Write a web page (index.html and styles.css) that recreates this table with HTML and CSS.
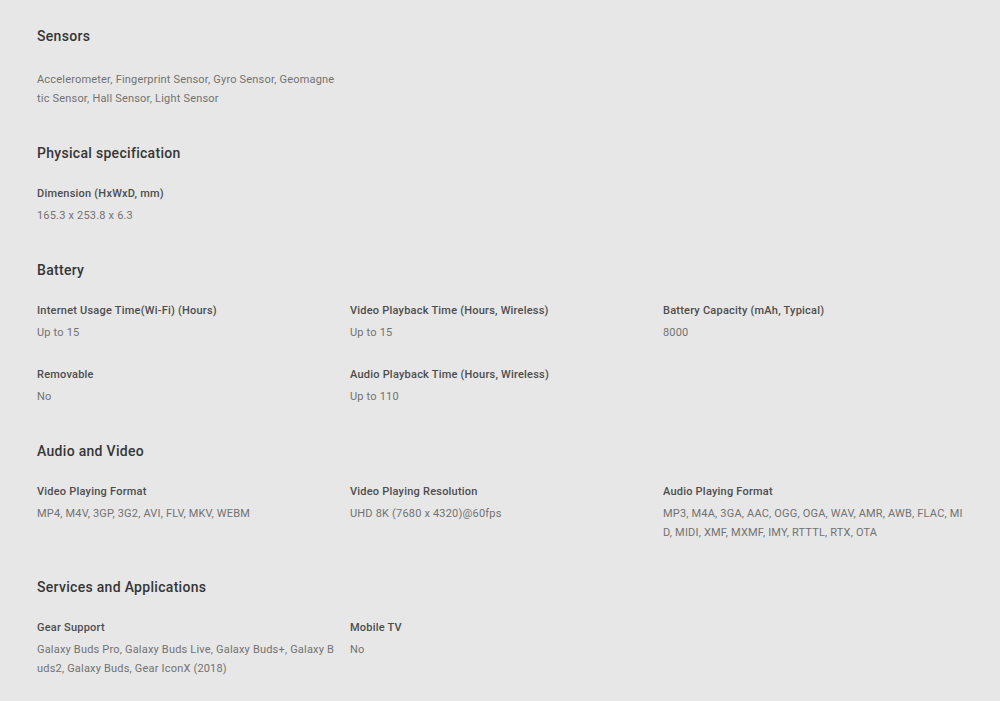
FILE: index.html
```html
<!DOCTYPE html>
<html>
<head>
<meta charset="utf-8">
<link rel="stylesheet" href="styles.css">
</head>
<body>
<main class="specs">
  <section class="spec-section">
    <h2 class="spec-title">Sensors</h2>
    <div class="spec-grid spec-grid--nolabel">
      <div class="spec-item">
        <p class="spec-value">Accelerometer, Fingerprint Sensor, Gyro Sensor, Geomagnetic Sensor, Hall Sensor, Light Sensor</p>
      </div>
    </div>
  </section>

  <section class="spec-section">
    <h2 class="spec-title">Physical specification</h2>
    <div class="spec-grid">
      <div class="spec-item">
        <h3 class="spec-label">Dimension (HxWxD, mm)</h3>
        <p class="spec-value">165.3 x 253.8 x 6.3</p>
      </div>
    </div>
  </section>

  <section class="spec-section">
    <h2 class="spec-title">Battery</h2>
    <div class="spec-grid">
      <div class="spec-item">
        <h3 class="spec-label">Internet Usage Time(Wi-Fi) (Hours)</h3>
        <p class="spec-value">Up to 15</p>
      </div>
      <div class="spec-item">
        <h3 class="spec-label">Video Playback Time (Hours, Wireless)</h3>
        <p class="spec-value">Up to 15</p>
      </div>
      <div class="spec-item">
        <h3 class="spec-label">Battery Capacity (mAh, Typical)</h3>
        <p class="spec-value">8000</p>
      </div>
      <div class="spec-item">
        <h3 class="spec-label">Removable</h3>
        <p class="spec-value">No</p>
      </div>
      <div class="spec-item">
        <h3 class="spec-label">Audio Playback Time (Hours, Wireless)</h3>
        <p class="spec-value">Up to 110</p>
      </div>
    </div>
  </section>

  <section class="spec-section">
    <h2 class="spec-title">Audio and Video</h2>
    <div class="spec-grid">
      <div class="spec-item">
        <h3 class="spec-label">Video Playing Format</h3>
        <p class="spec-value">MP4, M4V, 3GP, 3G2, AVI, FLV, MKV, WEBM</p>
      </div>
      <div class="spec-item">
        <h3 class="spec-label">Video Playing Resolution</h3>
        <p class="spec-value">UHD 8K (7680 x 4320)@60fps</p>
      </div>
      <div class="spec-item">
        <h3 class="spec-label">Audio Playing Format</h3>
        <p class="spec-value">MP3, M4A, 3GA, AAC, OGG, OGA, WAV, AMR, AWB, FLAC, MID, MIDI, XMF, MXMF, IMY, RTTTL, RTX, OTA</p>
      </div>
    </div>
  </section>

  <section class="spec-section">
    <h2 class="spec-title">Services and Applications</h2>
    <div class="spec-grid">
      <div class="spec-item">
        <h3 class="spec-label">Gear Support</h3>
        <p class="spec-value">Galaxy Buds Pro, Galaxy Buds Live, Galaxy Buds+, Galaxy Buds2, Galaxy Buds, Gear IconX (2018)</p>
      </div>
      <div class="spec-item">
        <h3 class="spec-label">Mobile TV</h3>
        <p class="spec-value">No</p>
      </div>
    </div>
  </section>
</main>
</body>
</html>
```

FILE: styles.css
```css
html, body {
  margin: 0;
  padding: 0;
  background: #e7e7e7;
}

body {
  font-family: Roboto, "Liberation Sans", sans-serif;
  color: #333;
}

.specs {
  padding: 26px 37px 0 37px;
}

.spec-section {
  margin-bottom: 35px;
}

.spec-title {
  margin: 0 0 23.5px 0;
  font-size: 14px;
  line-height: 20px;
  font-weight: 500;
  letter-spacing: 0.3px;
  color: #363636;
}

.spec-grid {
  display: grid;
  grid-template-columns: 300.4px 300.4px 300.4px;
  column-gap: 12.6px;
  row-gap: 25.5px;
}

.spec-label {
  margin: 0 0 3.5px 0;
  font-size: 11px;
  line-height: 16px;
  font-weight: 500;
  letter-spacing: 0.22px;
  color: #4d4d4d;
}

.spec-value {
  margin: 0;
  font-size: 11px;
  line-height: 19px;
  font-weight: 400;
  letter-spacing: 0.19px;
  color: #727272;
  word-break: break-all;
}
```
